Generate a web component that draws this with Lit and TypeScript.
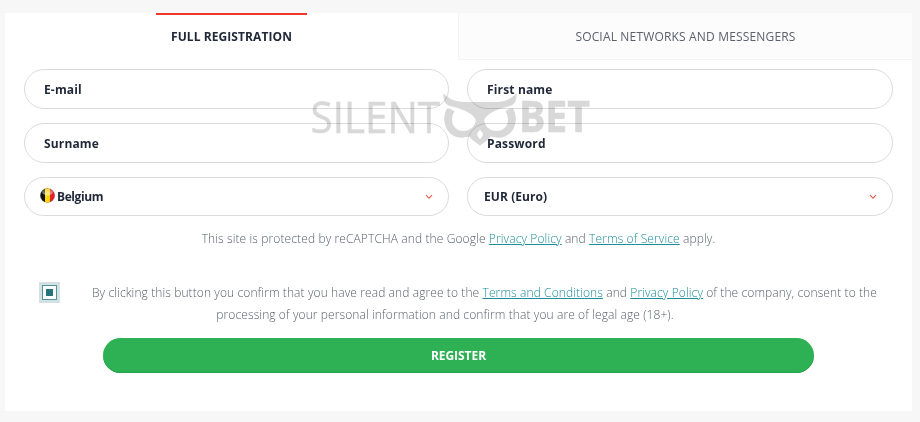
import { LitElement, html, css, svg } from "lit";
import { customElement } from "lit/decorators.js";

const chevron = html`<svg class="chev" width="8" height="6" viewBox="0 0 8 6">
  <path d="M1 1.2 L4 4.2 L7 1.2" fill="none" stroke="#e8604f" stroke-width="1.2" />
</svg>`;

// One half of the owl face; the other half is mirrored about x = 480.
const half = "M480.200 102 L464 102 C455 101.800 449 99 443.300 93.300 C443.300 99 444.500 103.500 448.500 105.500 C456 107.500 464 109.500 470 113.500 C474 116.500 476 118.500 475.700 121 C474.500 127.500 469 131.300 463 131 C456.500 130.500 452 126 452 120 C452 116.500 453 113.500 454.500 111.500 C452.500 109.500 449.500 108 447 108.500 C444.500 112 443.800 117 444.500 122 C445.500 131 452.500 137.500 461 137.700 C465 137.700 467.500 136.500 469.500 136.500 C472.500 141.500 477 142.500 480.200 145.800 L480.200 139.300 C478 137.500 477 135.500 477.200 133.800 C477.500 131.800 479.500 131.300 480.200 129 Z";

const owl = svg`<path d=${half} /><path d=${half} transform="translate(960 0) scale(-1 1)" />`;

@customElement("app-root")
export class AppRoot extends LitElement {
  static styles = css`
    :host { display: block; height: 422px; box-sizing: border-box; padding: 13px 8px 11px 5px;
      background: #f7f7f7; position: relative; overflow: hidden;
      font-family: "Open Sans", sans-serif; font-size: 12px; color: #5a616c; }
    .panel { height: 398px; background: #fff; }
    .tabs { display: grid; grid-template-columns: 453px 1fr; height: 47px; }
    .tab { display: flex; justify-content: center; box-sizing: border-box; text-transform: uppercase; }
    .tab.active { color: #20283a; font-weight: 700; letter-spacing: 0.08px; }
    .tab.active span { box-sizing: border-box; width: 151px; height: 47px; border-top: 2px solid #f1352b;
      text-align: center; line-height: 43px; }
    .tab.other { background: #fcfcfc; border-left: 1px solid #f3f3f3; border-bottom: 1px solid #f3f3f3;
      height: 47px; line-height: 47px; letter-spacing: 0.17px; }
    .fields { display: grid; grid-template-columns: 425px 426px; column-gap: 18px; row-gap: 14px;
      grid-template-rows: 40px 40px 39px; padding: 9px 19px 0; }
    .field { border: 1px solid #dadcdc; border-radius: 20px; box-sizing: border-box; display: flex;
      align-items: center; padding: 0 15px 0 19px; color: #1f2738; font-weight: 700; letter-spacing: 0.15px; }
    .field.select { padding-left: 16px; font-weight: 600; }
    .field.select .country { font-weight: 700; letter-spacing: -0.4px; }
    .field.select .currency { font-weight: 700; letter-spacing: 0.08px; }
    .flag { margin: -3px 2px 0 -1px; }
    .chev { margin-left: auto; }
    .captcha { text-align: center; line-height: 20px; margin-top: 13px; font-weight: 300; letter-spacing: 0.11px; }
    a { color: #1d8d9b; text-decoration: underline; }
    .agree { display: grid; grid-template-columns: 21px 1fr; column-gap: 19px; margin: 33px 22px 0 34px;
      font-weight: 300; text-align: center; line-height: 22px; letter-spacing: 0.1px; }
    .check { width: 21px; height: 21px; box-sizing: border-box; background: #d3e1e2; padding: 3px; }
    .check i { display: block; box-sizing: border-box; width: 15px; height: 15px; border: 1px solid #4f979a;
      background: linear-gradient(#237579, #237579) center / 7px 7px no-repeat #fff; }
    .line { display: block; white-space: nowrap; }
    .line.second { padding-right: 79px; }
    .btn { display: block; width: 711px; height: 35px; margin: 12px 0 0 98px; border: 0; padding: 0;
      border-radius: 18px; background: #2eb155; box-shadow: inset 0 -1px #24a44a; color: #fff;
      font: 700 12px/35px "Open Sans", sans-serif; letter-spacing: -0.05px; text-align: center; }
    .mark { position: absolute; left: 0; top: 0; pointer-events: none; mix-blend-mode: multiply; }
  `;

  render() {
    return html`
      <div class="panel">
        <div class="tabs">
          <div class="tab active"><span>Full registration</span></div>
          <div class="tab other"><span>Social networks and messengers</span></div>
        </div>
        <div class="fields">
          <div class="field"><span>E-mail</span></div>
          <div class="field"><span>First name</span></div>
          <div class="field"><span>Surname</span></div>
          <div class="field"><span>Password</span></div>
          <div class="field select">
            <svg class="flag" width="15" height="15" viewBox="0 0 15 15">
              <defs>
                <clipPath id="c"><circle cx="7.500" cy="7.500" r="7.200" /></clipPath>
                <linearGradient id="g" x1="0" y1="0" x2="0" y2="1">
                  <stop offset="0" stop-color="#fff" stop-opacity=".15" />
                  <stop offset="1" stop-color="#fff" stop-opacity=".55" />
                </linearGradient>
              </defs>
              <g clip-path="url(#c)">
                <rect width="5" height="15" fill="#111" /><rect x="5" width="5" height="15" fill="#fdd406" />
                <rect x="10" width="5" height="15" fill="#e51f2c" />
                <ellipse cx="7.500" cy="3.800" rx="5.500" ry="3.600" fill="url(#g)" />
              </g>
              <circle cx="7.500" cy="7.500" r="7" fill="none" stroke="#5a2a10" stroke-opacity=".35" stroke-width=".7" />
            </svg>
            <span class="country">Belgium</span>${chevron}
          </div>
          <div class="field select"><span class="currency">EUR (Euro)</span>${chevron}</div>
        </div>
        <div class="captcha">This site is protected by reCAPTCHA and the Google <a>Privacy Policy</a> and <a>Terms of Service</a> apply.</div>
        <div class="agree">
          <div class="check"><i></i></div>
          <div>
            <span class="line">By clicking this button you confirm that you have read and agree to the <a>Terms and Conditions</a> and <a>Privacy Policy</a> of the company, consent to the</span>
            <span class="line second">processing of your personal information and confirm that you are of legal age (18+).</span>
          </div>
        </div>
        <button class="btn">REGISTER</button>
      </div>
      <svg class="mark" width="920" height="422" fill="#d8d8d8">
        <text x="310.500" y="132.500" font-size="43.500" font-weight="400" stroke="#d8d8d8" stroke-width=".5" font-family="Open Sans, sans-serif" textLength="129.500" lengthAdjust="spacingAndGlyphs">SILENT</text>
        ${owl}
        <text x="519" y="132" font-size="43.500" font-weight="700" stroke="#d8d8d8" stroke-width=".6" font-family="Open Sans, sans-serif" textLength="71" lengthAdjust="spacingAndGlyphs">BET</text>
      </svg>
    `;
  }
}
